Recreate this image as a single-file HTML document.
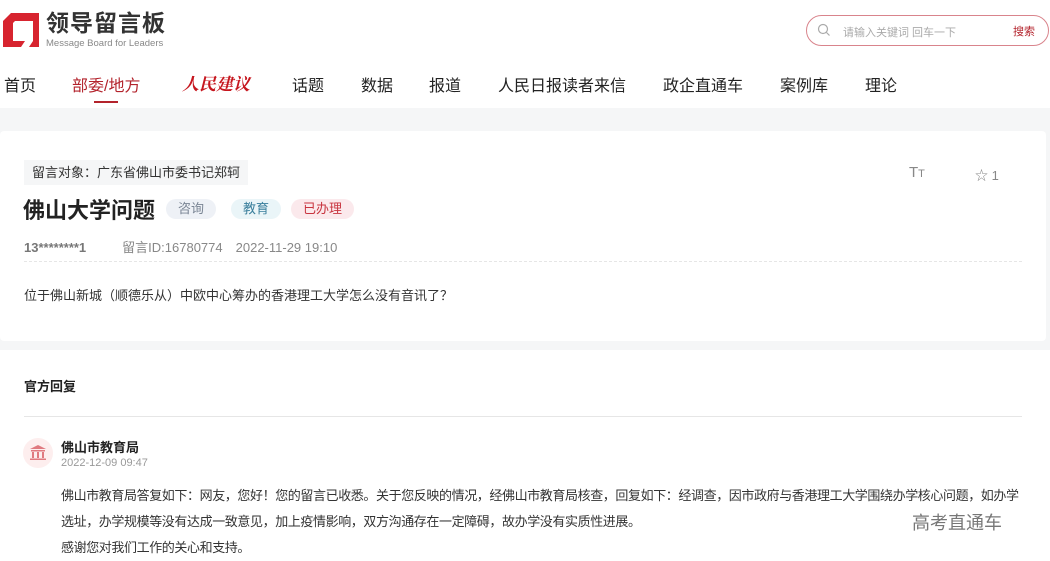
<!DOCTYPE html>
<html><head><meta charset="utf-8"><style>
*{margin:0;padding:0;box-sizing:border-box}
body{width:1050px;height:561px;overflow:hidden;background:#fff;font-family:"Liberation Sans","Noto Sans CJK SC",sans-serif;color:#333;position:relative}
.abs{position:absolute}
.nav span{position:absolute;top:72px;font-size:16px;color:#222;white-space:nowrap}
.tag{display:inline-block;position:absolute;top:199px;height:20px;line-height:20px;border-radius:10px;font-size:13px;padding:0 12px}
</style></head><body>
<svg class="abs" style="left:3px;top:13px" width="36" height="36" viewBox="0 0 36 36">
<path d="M8 0H36V34H26L30 28V8H12L8 12Z M0 8H10V28H22L18 34H0Z" fill="#d7242f"/>
<path d="M8 0L0 8H8Z" fill="#d7242f"/>
</svg>
<div class="abs" style="left:46px;top:9px;font-size:23px;font-weight:bold;color:#333;letter-spacing:1px;line-height:28px">领导留言板</div>
<div class="abs" style="left:46px;top:38px;font-size:9.5px;color:#888;line-height:12px">Message Board for Leaders</div>
<div class="abs" style="left:806px;top:15px;width:243px;height:31px;border:1px solid #d9848c;border-radius:16px"></div>
<svg class="abs" style="left:817px;top:23px" width="14" height="14" viewBox="0 0 14 14"><circle cx="6" cy="6" r="4.5" fill="none" stroke="#aaa" stroke-width="1.2"/><path d="M9.5 9.5L12.5 12.5" stroke="#aaa" stroke-width="1.2"/></svg>
<div class="abs" style="left:843px;top:24px;font-size:11px;color:#aaa">请输入关键词 回车一下</div>
<div class="abs" style="left:1013px;top:23px;font-size:11px;color:#b3232c">搜索</div>
<div class="nav">
<span style="left:4px">首页</span>
<span style="left:72px;color:#b3232c">部委/地方</span>
<span style="left:182px;color:#c6161e;font-weight:bold;font-style:italic;font-family:'Noto Serif CJK SC',serif;font-size:17px;top:70px">人民建议</span>
<span style="left:292px">话题</span>
<span style="left:361px">数据</span>
<span style="left:429px">报道</span>
<span style="left:498px">人民日报读者来信</span>
<span style="left:663px">政企直通车</span>
<span style="left:780px">案例库</span>
<span style="left:865px">理论</span>
</div>
<div class="abs" style="left:94px;top:101px;width:24px;height:2px;background:#b3232c"></div>
<div class="abs" style="left:0;top:108px;width:1050px;height:242px;background:#f5f6f7"></div>
<div class="abs" style="left:0;top:131px;width:1046px;height:210px;background:#fff;border-radius:4px"></div>
<div class="abs" style="left:0;top:350px;width:1050px;height:211px;background:#fff"></div>
<div class="abs" style="left:24px;top:160px;height:25px;line-height:25px;padding:0 8px;background:#f5f6f7;font-size:13px;color:#333">留言对象：广东省佛山市委书记郑轲</div>
<div class="abs" style="left:23px;top:193px;font-size:22px;font-weight:bold;color:#222">佛山大学问题</div>
<span class="tag" style="left:166px;background:#eef1f6;color:#7a8594">咨询</span>
<span class="tag" style="left:231px;background:#eaf5f8;color:#3a7f9c">教育</span>
<span class="tag" style="left:291px;background:#fbe9ec;color:#c8343f">已办理</span>
<div class="abs" style="left:24px;top:237px;font-size:13px;color:#888"><b style="color:#777">13********1</b><span style="margin-left:36px">留言ID:16780774</span><span style="margin-left:13px">2022-11-29 19:10</span></div>
<div class="abs" style="left:24px;top:261px;width:998px;border-top:1px dashed #e6e6e6"></div>
<div class="abs" style="left:24px;top:285px;font-size:13px;color:#333">位于佛山新城（顺德乐从）中欧中心筹办的香港理工大学怎么没有音讯了？</div>
<div class="abs" style="left:909px;top:164px;font-size:15px;color:#888">T<span style="font-size:11px">T</span></div>
<div class="abs" style="left:975px;top:165px;font-size:13px;color:#888">☆ 1</div>
<div class="abs" style="left:24px;top:376px;font-size:13px;font-weight:bold;color:#222">官方回复</div>
<div class="abs" style="left:24px;top:416px;width:998px;border-top:1px solid #e6e6e6"></div>
<div class="abs" style="left:23px;top:438px;width:30px;height:30px;border-radius:50%;background:#fdeeee"></div>
<svg class="abs" style="left:29px;top:444px" width="18" height="17" viewBox="0 0 18 17"><path d="M9 1L1 5H17Z" fill="#e07a80"/><rect x="2" y="6" width="14" height="1.5" fill="#e07a80"/><rect x="3" y="8" width="2" height="6" fill="#e07a80"/><rect x="8" y="8" width="2" height="6" fill="#e07a80"/><rect x="13" y="8" width="2" height="6" fill="#e07a80"/><rect x="1" y="14.5" width="16" height="1.5" fill="#e07a80"/></svg>
<div class="abs" style="left:61px;top:437px;font-size:13px;font-weight:bold;color:#222">佛山市教育局</div>
<div class="abs" style="left:61px;top:457px;font-size:11px;color:#999">2022-12-09 09:47</div>
<div class="abs" style="left:61px;top:483px;width:966px;font-size:13px;line-height:26px;color:#333;letter-spacing:-0.4px">佛山市教育局答复如下：网友，您好！您的留言已收悉。关于您反映的情况，经佛山市教育局核查，回复如下：经调查，因市政府与香港理工大学围绕办学核心问题，如办学选址，办学规模等没有达成一致意见，加上疫情影响，双方沟通存在一定障碍，故办学没有实质性进展。<br>感谢您对我们工作的关心和支持。</div>
<div class="abs" style="left:912px;top:509px;font-size:18px;color:#777;background:rgba(255,255,255,.8)">高考直通车</div>
</body></html>
